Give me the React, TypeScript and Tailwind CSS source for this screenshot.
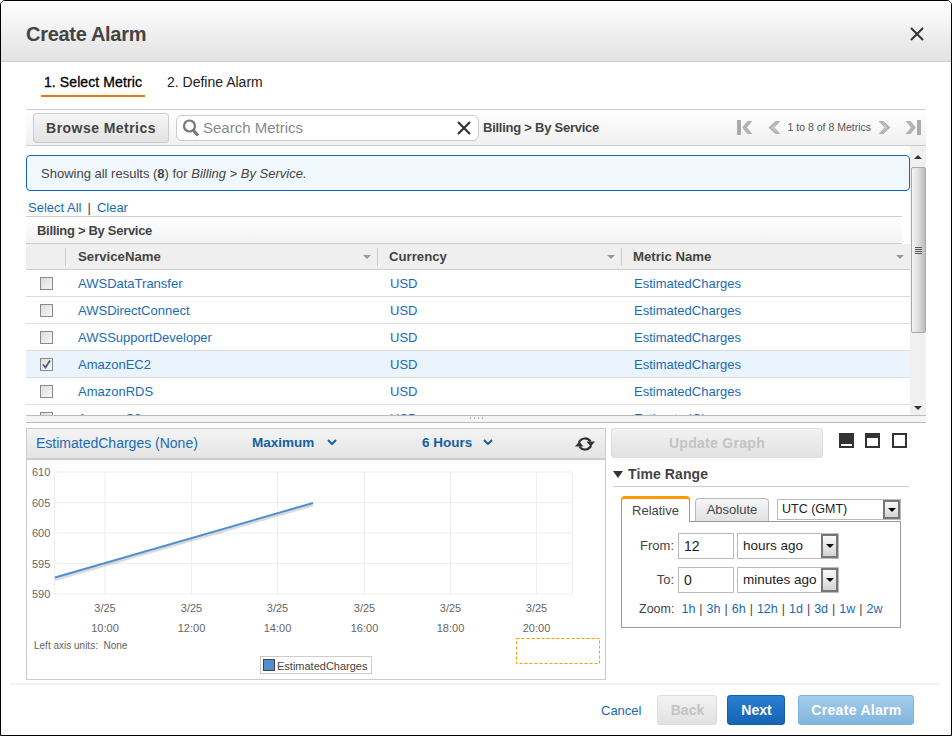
const rows = [
  { name: "AWSDataTransfer" },
  { name: "AWSDirectConnect" },
  { name: "AWSSupportDeveloper" },
  { name: "AmazonEC2", checked: true },
  { name: "AmazonRDS" },
  { name: "AmazonS3" },
];

const ticks = [
  { x: 105, time: "10:00" },
  { x: 191.5, time: "12:00" },
  { x: 277.5, time: "14:00" },
  { x: 364.5, time: "16:00" },
  { x: 450.5, time: "18:00" },
  { x: 536.5, time: "20:00" },
];

const levels = [
  { y: 472, label: "610" },
  { y: 502.5, label: "605" },
  { y: 533, label: "600" },
  { y: 563.5, label: "595" },
  { y: 594, label: "590" },
];

const zooms = ["1h", "3h", "6h", "12h", "1d", "3d", "1w", "2w"];

function PageArrow({ flip }: { flip?: boolean }) {
  return (
    <svg width="13" height="15" viewBox="0 0 13 15" className={flip ? "-scale-x-100" : ""}>
      <path d="M7.5 1 L0.5 7.5 L7.5 14 L12.5 14 L6.5 7.5 L12.5 1 Z" fill="#b4b4b4" />
      <path d="M4 7.5 L8.5 3 L6 7.5 L8.5 12 Z" fill="#cfcfcf" />
    </svg>
  );
}

function PageEnd({ flip }: { flip?: boolean }) {
  return (
    <svg width="16" height="15" viewBox="0 0 16 15" className={flip ? "-scale-x-100" : ""}>
      <rect x="0" y="0" width="4" height="15" fill="#aaa" />
      <path d="M10.5 1 L5 7.5 L10.5 14 L15.5 14 L10 7.5 L15.5 1 Z" fill="#b4b4b4" />
    </svg>
  );
}

function SortCaret() {
  return <span className="h-0 w-0 border-x-[4px] border-t-[4px] border-x-transparent border-t-[#999]" />;
}

function Chevron() {
  return (
    <svg width="10" height="6" viewBox="0 0 10 6" className="inline align-[2px]">
      <path d="M1 1 L5 5 L9 1" fill="none" stroke="#15609f" strokeWidth="2" />
    </svg>
  );
}

function Checkbox({ checked }: { checked?: boolean }) {
  return (
    <span className="flex h-[13px] w-[13px] items-center justify-center border border-[#8a8a8a] bg-gradient-to-br from-[#dcdcdc] to-[#f8f8f8]">
      {checked && (
        <svg width="9" height="9" viewBox="0 0 9 9">
          <path d="M1 4.5 L3.5 7.5 L8 0.5" fill="none" stroke="#4a5a80" strokeWidth="1.8" />
        </svg>
      )}
    </span>
  );
}

function DropButton() {
  return (
    <span className="flex h-full w-[17px] shrink-0 items-center justify-center border-2 border-[#777] bg-gradient-to-b from-[#fafafa] to-[#d4d4d4]">
      <span className="h-0 w-0 border-x-[4px] border-t-[4px] border-x-transparent border-t-black" />
    </span>
  );
}

function FakeSelect({ label }: { label: string }) {
  return (
    <div className="ml-[3px] flex h-[26px] w-[102px] items-center justify-between border border-[#bbb] pl-[5px] text-[13.5px] text-[#222]">
      <span>{label}</span>
      <DropButton />
    </div>
  );
}

function Chart() {
  return (
    <svg width="578" height="221" viewBox="27 460 578 221" className="block" fontFamily="Liberation Sans, Arial, sans-serif">
      {levels.map((l) => (
        <g key={l.label}>
          <line x1="54" x2="573" y1={l.y} y2={l.y} stroke="#eeeeee" />
          <text x="32" y={l.y + 4} fontSize="11" fill="#666">{l.label}</text>
        </g>
      ))}
      <line x1="54.5" x2="54.5" y1="472" y2="594" stroke="#eeeeee" />
      <line x1="572.5" x2="572.5" y1="472" y2="594" stroke="#eeeeee" />
      {ticks.map((t) => (
        <g key={t.time}>
          <line x1={t.x} x2={t.x} y1="472" y2="594" stroke="#eeeeee" />
          <text x={t.x} y="612" fontSize="11" fill="#666" textAnchor="middle">3/25</text>
          <text x={t.x} y="632" fontSize="11" fill="#666" textAnchor="middle">{t.time}</text>
        </g>
      ))}
      <line x1="55" y1="579.5" x2="313" y2="505" stroke="#000" strokeOpacity="0.14" strokeWidth="3" />
      <line x1="55" y1="577.5" x2="313" y2="503" stroke="#4f8fd0" strokeWidth="2" />
      <text x="34" y="649" fontSize="10" fill="#666" xmlSpace="preserve">Left axis units:  None</text>
      <rect x="260.5" y="656.5" width="111" height="17" fill="#fff" stroke="#ccc" />
      <rect x="263.5" y="659.5" width="11" height="11" fill="#4f8fd0" stroke="#444" />
      <text x="277" y="669.5" fontSize="11" fill="#444">EstimatedCharges</text>
      <rect x="516.5" y="638.5" width="83" height="25" fill="none" stroke="#f90" strokeDasharray="3 2" />
    </svg>
  );
}

export default function App() {
  return (
    <div className="relative flex h-[736px] w-[952px] flex-col overflow-hidden rounded-t-[5px] border border-black bg-white font-['Liberation_Sans',Arial,sans-serif]">
      <header className="flex h-[61px] shrink-0 items-center justify-between border-b border-[#ccc] bg-gradient-to-b from-white to-[#e2e2e2] pl-[25px] pr-[27px] pt-[6px]">
        <h1 className="text-[20px] font-bold tracking-[-0.3px] text-[#444]">Create Alarm</h1>
        <svg width="14" height="14" viewBox="0 0 14 14">
          <path d="M1 1 L13 13 M13 1 L1 13" stroke="#333" strokeWidth="2" />
        </svg>
      </header>

      <nav className="flex h-[47px] shrink-0 items-start pl-[40px] pt-[10px] text-[14px] text-[#222]">
        <span className="w-[104px] border-b-2 border-[#e47911] pb-[2px] text-center font-medium tracking-[0.1px] text-black [-webkit-text-stroke:0.3px_black]">1. Select Metric</span>
        <span className="ml-[22px]">2. Define Alarm</span>
      </nav>

      <div className="mx-[25px] flex h-[37px] w-[900px] shrink-0 items-center border-y border-[#ccc] bg-gradient-to-b from-white to-[#f0f0f0] pl-[7px] pr-[5px]">
        <button className="h-[30px] w-[136px] rounded-[3px] border border-[#ccc] bg-gradient-to-b from-[#f6f6f6] to-[#e2e2e2] pt-[1px] text-[14px] font-bold tracking-[0.45px] text-[#444]">Browse Metrics</button>
        <div className="ml-[7px] flex h-[26px] w-[303px] items-center rounded-[6px] border border-[#ccc] bg-white pl-[5px] pr-[7px]">
          <svg width="18" height="20" viewBox="0 0 18 20">
            <circle cx="7.5" cy="8" r="5.5" fill="none" stroke="#777" strokeWidth="2.2" />
            <path d="M11.5 12.5 L16 17.5" stroke="#777" strokeWidth="3" />
          </svg>
          <span className="ml-[3px] flex-1 pt-[1px] text-[15px] text-[#888]">Search Metrics</span>
          <svg width="14" height="14" viewBox="0 0 14 14">
            <path d="M1 1 L13 13 M13 1 L1 13" stroke="#333" strokeWidth="2.2" />
          </svg>
        </div>
        <span className="ml-[4px] pt-[1px] text-[13px] font-bold tracking-[-0.25px] text-[#444]">Billing &gt; By Service</span>
        <div className="ml-auto flex items-center text-[10.5px] text-[#555]">
          <PageEnd />
          <span className="ml-[15px]"><PageArrow /></span>
          <span className="ml-[7px] mr-[7px]">1 to 8 of 8 Metrics</span>
          <PageArrow flip />
          <span className="ml-[14px]"><PageEnd flip /></span>
        </div>
      </div>

      <div className="ml-[25px] flex h-[269px] w-[900px] shrink-0">
        <div className="h-full w-[884px] overflow-hidden pt-[9px]">
          <div className="flex h-[36px] items-center rounded-[4px] border border-[#1166bb] bg-[#f0f7fd] pl-[14px] pt-[1px] text-[13px] text-[#444]">
            <span>Showing all results (<b>8</b>) for <i>Billing &gt; By Service.</i></span>
          </div>
          <div className="flex h-[26px] w-[876px] items-end border-b border-[#ccc] pb-[1px] pl-[2px] text-[13px] leading-[15px] text-[#1a6bb5]">
            <span>Select All</span>
            <span className="mx-[6px] text-[#444]">|</span>
            <span>Clear</span>
          </div>
          <div className="flex h-[27px] w-[876px] items-center border-b border-[#ccc] bg-gradient-to-b from-white to-[#f2f2f2] pl-[11px] pt-[1px] text-[13px] font-bold tracking-[-0.3px] text-[#444]">Billing &gt; By Service</div>
          <div className="flex h-[26px] items-center border-b border-[#ccc] bg-[#efefef] pt-[1px] text-[13.2px] font-bold text-[#444]">
            <span className="h-[18px] w-[40px] border-r border-[#ccc]" />
            <div className="flex h-[18px] w-[312px] items-center justify-between border-r border-[#ccc] pl-[12px] pr-[6px]">
              <span>ServiceName</span>
              <SortCaret />
            </div>
            <div className="flex h-[18px] w-[244px] items-center justify-between border-r border-[#ccc] pl-[11px] pr-[6px]">
              <span>Currency</span>
              <SortCaret />
            </div>
            <div className="flex flex-1 items-center justify-between pl-[11px] pr-[6px]">
              <span>Metric Name</span>
              <SortCaret />
            </div>
          </div>
          {rows.map((r) => (
            <div key={r.name} className={`flex h-[27px] items-center border-b border-[#ddd] pt-[1px] text-[13px] text-[#1a6bb5] ${r.checked ? "bg-[#ebf3fd]" : "bg-white"}`}>
              <span className="flex w-[40px] justify-center pl-[1px]"><Checkbox checked={r.checked} /></span>
              <span className="w-[312px] pl-[12px]">{r.name}</span>
              <span className="w-[244px] pl-[12px]">USD</span>
              <span className="pl-[12px]">EstimatedCharges</span>
            </div>
          ))}
        </div>
        <div className="flex h-full w-[16px] flex-col items-center bg-[#f0f0f0] pt-[9px] pb-[5px]">
          <span className="h-0 w-0 border-x-[4px] border-b-[4px] border-x-transparent border-b-[#333]" />
          <div className="mt-[8px] flex h-[166px] w-[15px] items-end justify-center rounded-[2px] border border-[#aaa] bg-gradient-to-r from-[#f4f4f4] via-[#ddd] to-[#bbb] pb-[78px]">
            <span className="h-[7px] w-[7px] border-y-[3px] border-double border-[#555]" />
          </div>
          <span className="mt-auto h-0 w-0 border-x-[4px] border-t-[4px] border-x-transparent border-t-[#333]" />
        </div>
      </div>

      <div className="ml-[25px] flex h-[8px] w-[900px] shrink-0 justify-center gap-[3px] border-y border-[#bbb] bg-[#f4f4f4] pt-[1px]">
        <span className="h-[2px] w-[1px] bg-[#bbb]" />
        <span className="h-[2px] w-[1px] bg-[#bbb]" />
        <span className="h-[2px] w-[1px] bg-[#bbb]" />
        <span className="h-[2px] w-[1px] bg-[#bbb]" />
      </div>

      <div className="ml-[25px] mt-[5px] flex w-[884px] shrink-0 items-start">
        <section className="h-[252px] w-[580px] shrink-0 border border-[#ccc]">
          <div className="flex h-[31px] items-center border-b-2 border-[#ccc] bg-gradient-to-b from-[#f4f4f4] to-[#e4e4e4] pl-[9px] pr-[10px] text-[14px]">
            <span className="w-[193px] text-[#1a6bb5]">EstimatedCharges (None)</span>
            <span className="w-[193px] pl-[23px] text-[13.5px] font-bold text-[#15609f]">Maximum <span className="ml-[9px]"><Chevron /></span></span>
            <span className="text-[13.5px] font-bold text-[#15609f]">6 Hours <span className="ml-[7px]"><Chevron /></span></span>
            <svg width="20" height="18" viewBox="0 0 20 18" className="ml-auto">
              <path d="M4 7.5 A6.5 6.5 0 0 1 15.5 6.5 M16 10.5 A6.5 6.5 0 0 1 4.5 11.5" fill="none" stroke="#333" strokeWidth="2.2" />
              <path d="M11.5 6.5 L20 6.5 L15.8 11.5 Z M0 11.5 L8.5 11.5 L4.2 6.5 Z" fill="#333" />
            </svg>
          </div>
          <Chart />
        </section>

        <aside className="ml-[5px] flex-1">
          <div className="flex items-center">
            <button className="h-[30px] w-[212px] rounded-[3px] border border-[#ddd] bg-gradient-to-b from-[#f2f2f2] to-[#e2e2e2] text-[14px] font-bold tracking-[0.3px] text-[#c4c4c4]">Update Graph</button>
            <div className="ml-[16px] flex pb-[6px]">
              <span className="h-[15px] w-[15px] bg-[#333] pt-[11px]"><span className="mx-[2px] block h-[2px] bg-white" /></span>
              <span className="ml-[11px] h-[15px] w-[15px] bg-[#333] pt-[5px]"><span className="mx-[2px] block h-[8px] bg-white" /></span>
              <span className="ml-[12px] h-[15px] w-[15px] border-2 border-[#333] bg-white" />
            </div>
          </div>
          <div className="ml-[2px] mt-[6px] flex h-[23px] w-[296px] items-center border-b border-[#ccc] pb-[2px] text-[14px] font-bold tracking-[0.1px] text-[#444]">
            <span className="mr-[5px] h-0 w-0 border-x-[5.5px] border-t-[7px] border-x-transparent border-t-[#333]" />
            Time Range
          </div>
          <div className="ml-[10px] mt-[9px] w-[280px]">
            <div className="flex items-end text-[13px] text-[#444]">
              <span className="z-10 -mb-px flex h-[26px] w-[69px] items-center justify-center rounded-t-[4px] border-x border-t-[3px] border-x-[#999] border-t-[#f90] bg-white">Relative</span>
              <span className="ml-[5px] flex h-[23px] w-[74px] items-center justify-center rounded-t-[4px] border-x border-t border-[#bbb] bg-gradient-to-b from-[#f6f6f6] to-[#e2e2e2]">Absolute</span>
              <div className="mb-[1px] ml-[8px] flex h-[21px] w-[124px] items-center justify-between border border-[#bbb] pl-[4px] text-[12.5px] text-[#222]">
                <span>UTC (GMT)</span>
                <DropButton />
              </div>
            </div>
            <div className="h-[107px] border border-[#999] pt-[11px] text-[14px] text-[#444]">
              <div className="flex h-[26px] items-center">
                <span className="w-[52px] text-right text-[13px]">From:</span>
                <span className="ml-[4px] flex h-[26px] w-[56px] items-center border border-[#bbb] pl-[5px] text-[#222]">12</span>
                <FakeSelect label="hours ago" />
              </div>
              <div className="mt-[8px] flex h-[26px] items-center">
                <span className="w-[52px] text-right text-[13px]">To:</span>
                <span className="ml-[4px] flex h-[26px] w-[56px] items-center border border-[#bbb] pl-[5px] text-[#222]">0</span>
                <FakeSelect label="minutes ago" />
              </div>
              <div className="mt-[7px] flex items-center pl-[17px] text-[12.5px]">
                <span className="mr-[7px]">Zoom:</span>
                {zooms.map((z, i) => (
                  <span key={z} className="text-[#1a6bb5]">
                    {i > 0 && <span className="mx-[4px] text-[#444]">|</span>}
                    {z}
                  </span>
                ))}
              </div>
            </div>
          </div>
        </aside>
      </div>

      <div className="ml-[9px] mt-[3px] h-[2px] w-[930px] shrink-0 bg-[#f2f2f2]" />

      <footer className="flex flex-1 items-start pl-[600px] pt-[10px]">
        <span className="mt-[6px] text-[13px] text-[#1a6bb5]">Cancel</span>
        <button className="ml-[16px] h-[30px] w-[60px] rounded-[3px] border border-[#ddd] bg-gradient-to-b from-[#f2f2f2] to-[#e2e2e2] text-[14px] font-bold text-[#c4c4c4]">Back</button>
        <button className="ml-[10px] h-[30px] w-[58px] rounded-[3px] border border-[#1560a8] bg-gradient-to-b from-[#2a7fd0] to-[#1563b5] text-[14px] font-bold text-white">Next</button>
        <button className="ml-[13px] h-[30px] w-[116px] rounded-[3px] border border-[#7fb2d8] bg-gradient-to-b from-[#a2cdec] to-[#82b5dc] text-[14px] font-bold tracking-[0.3px] text-white">Create Alarm</button>
      </footer>
    </div>
  );
}
